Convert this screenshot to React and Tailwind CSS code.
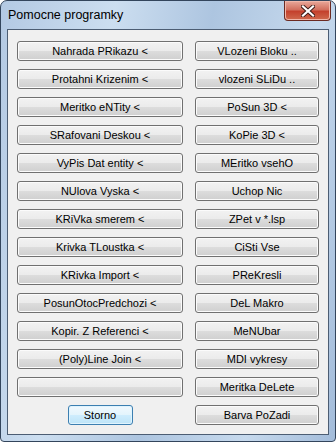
import React from "react";

const left = [
  "Nahrada PRikazu <",
  "Protahni Krizenim <",
  "Meritko eNTity <",
  "SRafovani Deskou <",
  "VyPis Dat entity <",
  "NUlova Vyska <",
  "KRiVka smerem <",
  "Krivka TLoustka <",
  "KRivka Import <",
  "PosunOtocPredchozi <",
  "Kopir. Z Referenci <",
  "(Poly)Line Join <",
  "",
];

const right = [
  "VLozeni Bloku ..",
  "vlozeni SLiDu ..",
  "PoSun 3D <",
  "KoPie 3D <",
  "MEritko vsehO",
  "Uchop Nic",
  "ZPet v *.lsp",
  "CiSti Vse",
  "PReKresli",
  "DeL Makro",
  "MeNUbar",
  "MDI vykresy",
  "Meritka DeLete",
];

const Btn = ({ label, className = "" }) => (
  <button
    className={
      "h-[20px] rounded-[3px] border border-[#707070] bg-[linear-gradient(180deg,#f2f2f2_0%,#ebebeb_50%,#dddddd_50%,#cfcfcf_100%)] shadow-[inset_0_0_0_1px_#fbfbfb] text-[11px] leading-none text-black flex items-center justify-center " +
      className
    }
  >
    {label}
  </button>
);

const App = () => {
  return (
    <div
      className="w-[336px] h-[442px] flex flex-col rounded-t-[7px] rounded-b-[4px] border border-[#33455c] bg-[linear-gradient(100deg,#b3c9e3_0%,#ccdef0_28%,#adc5e0_52%,#c6d9ed_78%,#a3bcda_100%)] overflow-hidden"
      style={{ fontFamily: '"Liberation Sans", Arial, sans-serif' }}
    >
      <div className="h-[28px] flex items-start justify-between shrink-0">
        <span className="mt-[5px] ml-[7px] text-[12.5px] text-black">Pomocne programky</span>
        <div className="mr-[4px] w-[47px] h-[20px] rounded-b-[4px] border border-t-0 border-[#6b2a22] bg-[linear-gradient(180deg,#e9a99b_0%,#d2705f_45%,#c4412d_55%,#cf6a4e_100%)] shadow-[inset_0_0_0_1px_#f0b7aa] flex items-center justify-center">
          <svg width="14" height="12" viewBox="0 0 14 12">
            <path
              d="M2 1.5 L12 10.5 M12 1.5 L2 10.5"
              stroke="#3b1a16"
              strokeWidth="4"
              strokeLinecap="square"
            />
            <path
              d="M2 1.5 L12 10.5 M12 1.5 L2 10.5"
              stroke="#ffffff"
              strokeWidth="2.2"
              strokeLinecap="square"
            />
          </svg>
        </div>
      </div>
      <div className="flex-1 mx-[6px] mb-[6px] border border-[#4c5d73] bg-[#f0f0f0] pt-[11px] px-[9px] flex justify-between">
        <div className="w-[166px] flex flex-col gap-[8px]">
          {left.map((l, i) => (
            <Btn key={i} label={l} className="w-full" />
          ))}
          <div className="flex justify-center">
            <button className="w-[65px] h-[20px] rounded-[3px] border border-[#3c7fb1] bg-[linear-gradient(180deg,#f1f9fe_0%,#e3f4fc_50%,#cfedfd_50%,#bde4f8_100%)] shadow-[inset_0_0_0_1px_#dff4fe] text-[11px] leading-none text-black flex items-center justify-center">
              Storno
            </button>
          </div>
        </div>
        <div className="w-[124px] flex flex-col gap-[8px]">
          {right.map((l, i) => (
            <Btn key={i} label={l} className="w-full" />
          ))}
          <Btn label="Barva PoZadi" className="w-full" />
        </div>
      </div>
    </div>
  );
};

export default App;
